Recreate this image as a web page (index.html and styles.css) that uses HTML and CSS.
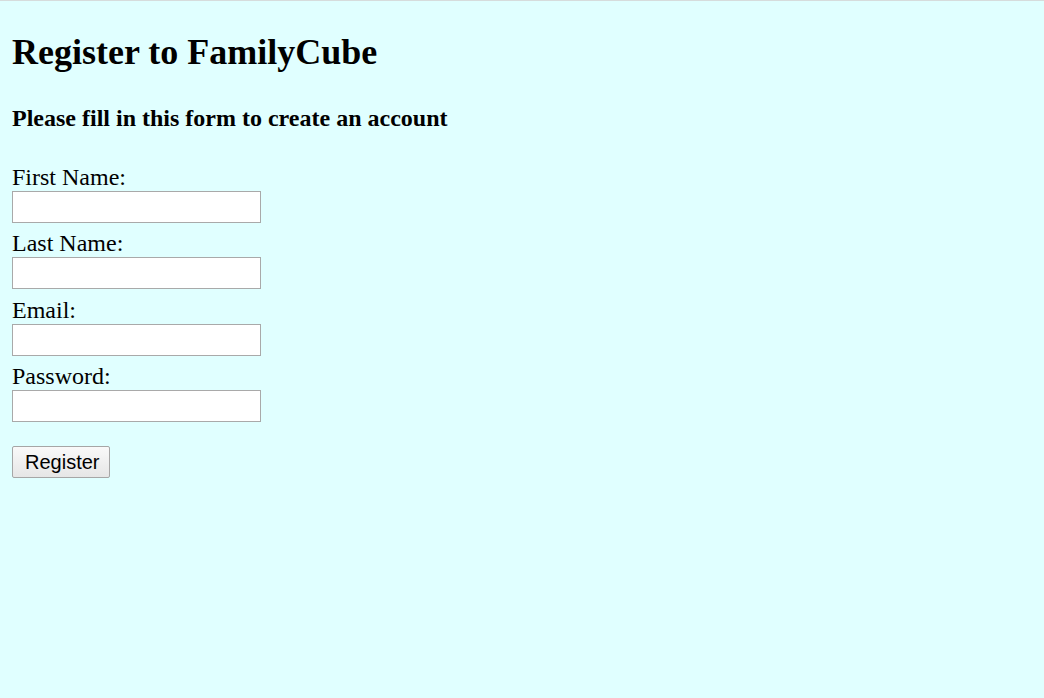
FILE: index.html
```html
<!DOCTYPE html>
<html lang="en">
<head>
<meta charset="utf-8">
<title>Register to FamilyCube</title>
<link rel="stylesheet" href="styles.css">
</head>
<body>
<main class="page">
  <h1 class="title">Register to FamilyCube</h1>
  <h3 class="subtitle">Please fill in this form to create an account</h3>
  <form class="form">
    <label class="label" for="first">First Name:</label>
    <input class="field" type="text" id="first" name="first">
    <label class="label" for="last">Last Name:</label>
    <input class="field" type="text" id="last" name="last">
    <label class="label" for="email">Email:</label>
    <input class="field" type="email" id="email" name="email">
    <label class="label" for="password">Password:</label>
    <input class="field" type="password" id="password" name="password">
    <button class="submit" type="submit">Register</button>
  </form>
</main>
</body>
</html>
```

FILE: styles.css
```css
html, body {
  margin: 0;
  padding: 0;
  height: 100%;
}

body {
  background: #e0ffff;
  border-top: 1px solid #d6dcdc;
  box-sizing: border-box;
  font-family: "Liberation Serif", "Times New Roman", serif;
  color: #000;
}

.page {
  padding: 31px 12px 0 12px;
}

.title {
  margin: 0 0 32px 0;
  font-size: 36px;
  line-height: 40px;
  font-weight: bold;
}

.subtitle {
  margin: 0 0 31px 0;
  font-size: 24px;
  line-height: 28px;
  font-weight: bold;
}

.form {
  display: flex;
  flex-direction: column;
  align-items: flex-start;
}

.label {
  display: block;
  font-size: 24px;
  line-height: 28px;
}

.field {
  display: block;
  box-sizing: border-box;
  width: 249px;
  height: 32px;
  margin: 0 0 6.33px 0;
  padding: 2px 4px;
  border: 1px solid #a9a9a9;
  border-radius: 0;
  background: #fff;
  font-family: "Liberation Sans", Arial, sans-serif;
  font-size: 20px;
  outline: none;
}

.submit {
  margin-top: 17.67px;
  box-sizing: border-box;
  width: 98px;
  height: 32px;
  padding: 1px 12px 0 12px;
  border: 1px solid #a6a6a6;
  border-radius: 2px;
  background: linear-gradient(#f9f9f9, #e6e6e6);
  font-family: "Liberation Sans", Arial, sans-serif;
  font-size: 20px;
  line-height: 24px;
  color: #000;
}
```
